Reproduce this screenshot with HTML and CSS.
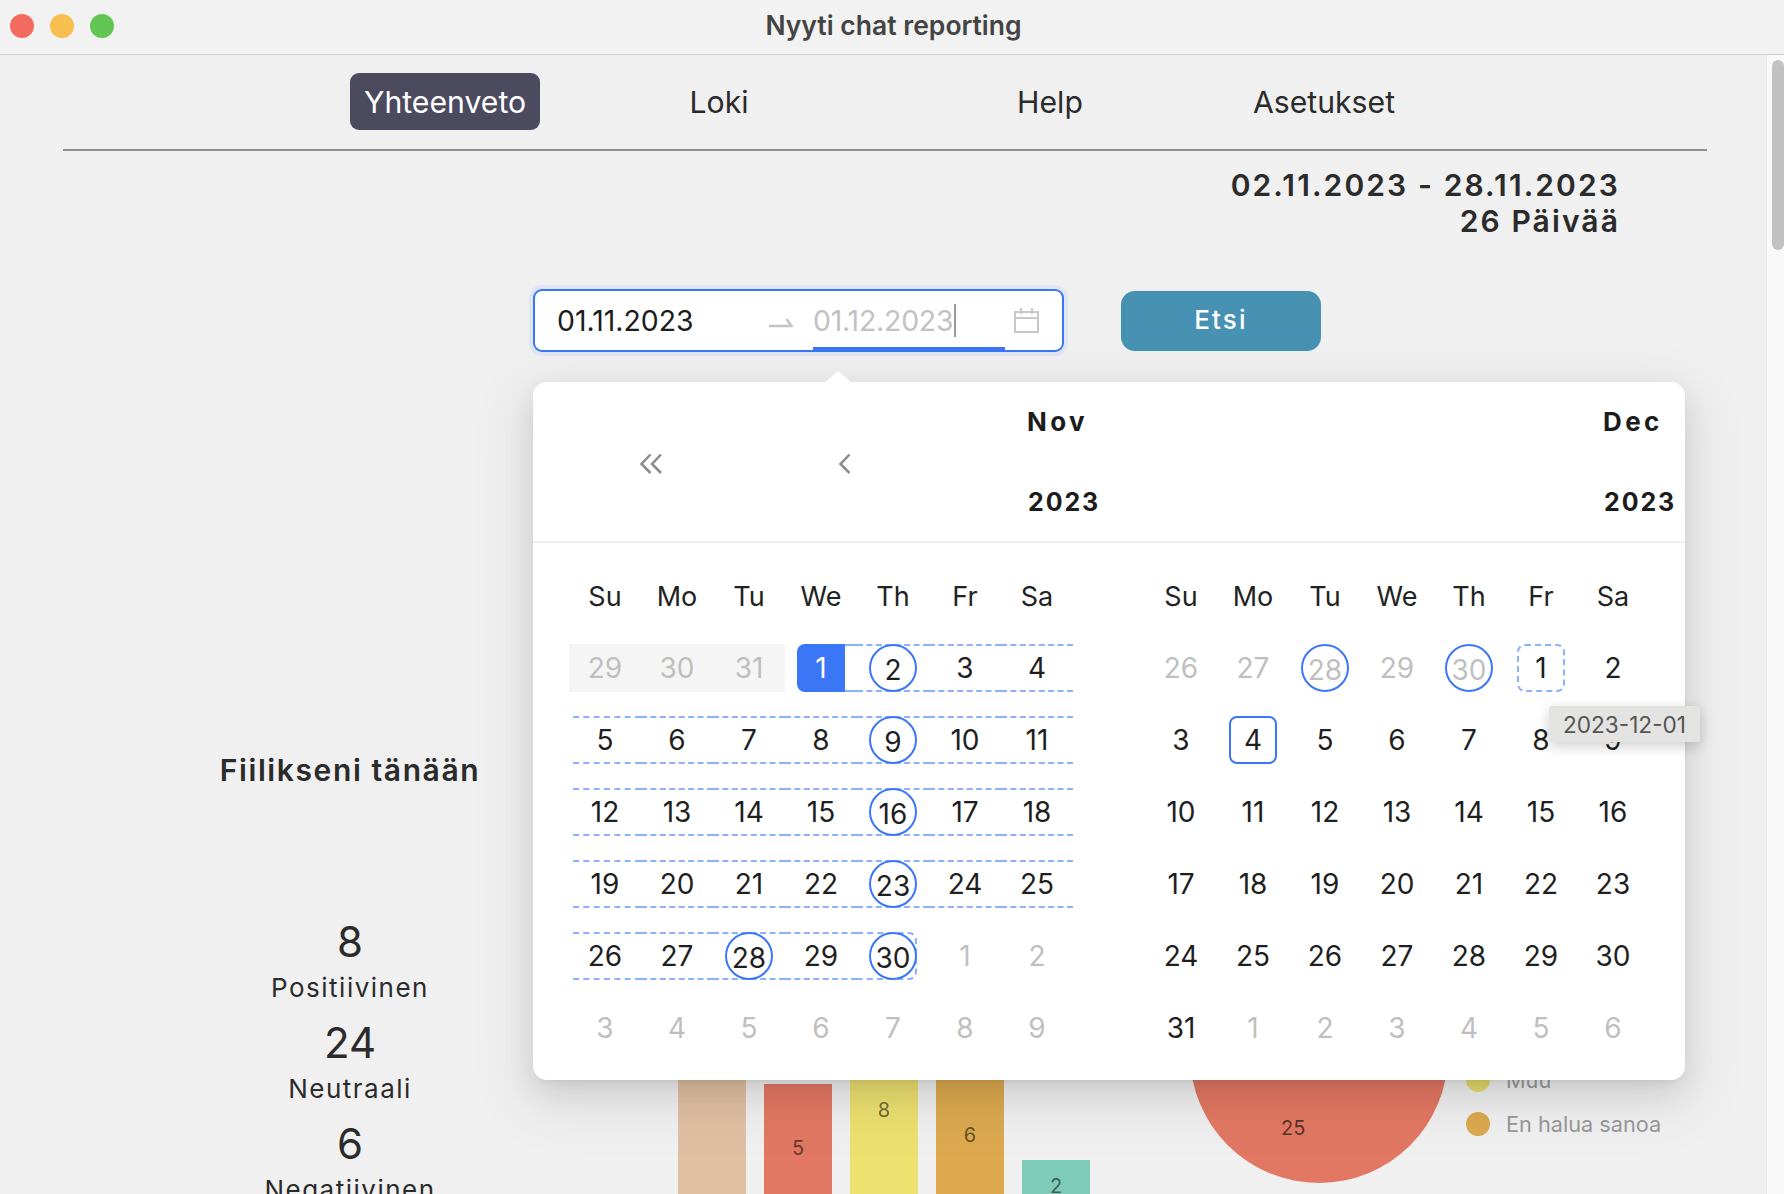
FILE: index.html
```html
<!DOCTYPE html>
<html lang="fi">
<head>
    <meta charset="UTF-8">
    <title>Nyyti chat reporting</title>
    <link rel="stylesheet" href="styles.css">
</head>
<body>

    <header class="titlebar">
        <div class="lights">
            <span class="light red"></span>
            <span class="light yellow"></span>
            <span class="light green"></span>
        </div>
        <div class="window-title">Nyyti chat reporting</div>
    </header>

    <div class="window">
        <main class="page">
            <nav class="nav">
                <a class="nav-item active">Yhteenveto</a>
                <a class="nav-item">Loki</a>
                <a class="nav-item">Help</a>
                <a class="nav-item">Asetukset</a>
            </nav>
            <div class="nav-line"></div>

            <div class="range-info">
                <div>02.11.2023 - 28.11.2023</div>
                <div>26 Päivää</div>
            </div>

            <div class="search-row">
                <div class="range-input">
                    <span class="range-from">01.11.2023</span>
                    <svg class="swap-icon" width="24" height="10" viewBox="0 0 24 10">
                        <path d="M0 8H22.5L17.5 1" fill="none" stroke="#c4c4c4" stroke-width="2.5"/>
                    </svg>
                    <span class="range-to">01.12.2023</span>
                    <svg class="date-icon" width="25" height="25" viewBox="0 0 25 25">
                        <path d="M1 4H24V24H1ZM1 10H24M7 0V6M18 0V6" fill="none" stroke="#c8c8c8" stroke-width="2"/>
                    </svg>
                    <span class="active-bar"></span>
                </div>
                <button class="search-btn">Etsi</button>
            </div>

            <section class="content">
                <div class="mood">
                    <h2 class="mood-title">Fiilikseni tänään</h2>
                    <div class="stat"><div class="stat-num">8</div><div class="stat-label">Positiivinen</div></div>
                    <div class="stat"><div class="stat-num">24</div><div class="stat-label">Neutraali</div></div>
                    <div class="stat"><div class="stat-num">6</div><div class="stat-label">Negatiivinen</div></div>
                </div>

                <div class="bars">
                    <div class="bar tan" style="height: 304px">12</div>
                    <div class="bar red-bar" style="height: 127px">5</div>
                    <div class="bar yellow-bar" style="height: 203px">8</div>
                    <div class="bar orange-bar" style="height: 152px">6</div>
                    <div class="bar teal-bar" style="height: 51px">2</div>
                </div>

                <svg class="pie" width="258" height="258" viewBox="0 0 258 258">
                    <circle cx="129" cy="129" r="129" fill="#e27863"/>
                    <text x="91" y="210" class="pie-label">25</text>
                </svg>

                <ul class="legend">
                    <li><span class="dot muu"></span>Muu</li>
                    <li><span class="dot sanoa"></span>En halua sanoa</li>
                </ul>
            </section>
        </main>

        <aside class="scrollbar"><div class="thumb"></div></aside>
    </div>

    <!-- Avoin kalenteri -->
    <div class="picker">
        <div class="picker-head">
            <div class="head-left">
                <svg class="prev-year" width="24" height="21" viewBox="0 0 24 21">
                    <path d="M11.5 1.5L2.5 11L11.5 20M22 1.5L13 11L22 20" fill="none" stroke="#8c8c8c" stroke-width="2.5"/>
                </svg>
                <svg class="prev-month" width="13" height="21" viewBox="0 0 13 21">
                    <path d="M11.5 1.5L2.5 11L11.5 20" fill="none" stroke="#8c8c8c" stroke-width="2.5"/>
                </svg>
                <div class="head-title"><span class="head-month">Nov</span><span class="head-year">2023</span></div>
            </div>
            <div class="head-right">
                <div class="head-title"><span class="head-month">Dec</span><span class="head-year">2023</span></div>
            </div>
        </div>

        <div class="months">
            <div class="month">
                <div class="wd">Su</div><div class="wd">Mo</div><div class="wd">Tu</div><div class="wd">We</div><div class="wd">Th</div><div class="wd">Fr</div><div class="wd">Sa</div>

                <div class="day off past"><span>29</span></div>
                <div class="day off past"><span>30</span></div>
                <div class="day off past"><span>31</span></div>
                <div class="day start"><span>1</span></div>
                <div class="day band"><span class="circle">2</span></div>
                <div class="day band"><span>3</span></div>
                <div class="day band"><span>4</span></div>

                <div class="day band first"><span>5</span></div>
                <div class="day band"><span>6</span></div>
                <div class="day band"><span>7</span></div>
                <div class="day band"><span>8</span></div>
                <div class="day band"><span class="circle">9</span></div>
                <div class="day band"><span>10</span></div>
                <div class="day band"><span>11</span></div>

                <div class="day band first"><span>12</span></div>
                <div class="day band"><span>13</span></div>
                <div class="day band"><span>14</span></div>
                <div class="day band"><span>15</span></div>
                <div class="day band"><span class="circle">16</span></div>
                <div class="day band"><span>17</span></div>
                <div class="day band"><span>18</span></div>

                <div class="day band first"><span>19</span></div>
                <div class="day band"><span>20</span></div>
                <div class="day band"><span>21</span></div>
                <div class="day band"><span>22</span></div>
                <div class="day band"><span class="circle">23</span></div>
                <div class="day band"><span>24</span></div>
                <div class="day band"><span>25</span></div>

                <div class="day band first"><span>26</span></div>
                <div class="day band"><span>27</span></div>
                <div class="day band"><span class="circle">28</span></div>
                <div class="day band"><span>29</span></div>
                <div class="day band last"><span class="circle">30</span></div>
                <div class="day off"><span>1</span></div>
                <div class="day off"><span>2</span></div>

                <div class="day off"><span>3</span></div>
                <div class="day off"><span>4</span></div>
                <div class="day off"><span>5</span></div>
                <div class="day off"><span>6</span></div>
                <div class="day off"><span>7</span></div>
                <div class="day off"><span>8</span></div>
                <div class="day off"><span>9</span></div>
            </div>

            <div class="month">
                <div class="wd">Su</div><div class="wd">Mo</div><div class="wd">Tu</div><div class="wd">We</div><div class="wd">Th</div><div class="wd">Fr</div><div class="wd">Sa</div>

                <div class="day off"><span>26</span></div>
                <div class="day off"><span>27</span></div>
                <div class="day off"><span class="circle">28</span></div>
                <div class="day off"><span>29</span></div>
                <div class="day off"><span class="circle">30</span></div>
                <div class="day"><span class="hover-end">1</span></div>
                <div class="day"><span>2</span></div>

                <div class="day"><span>3</span></div>
                <div class="day"><span class="today">4</span></div>
                <div class="day"><span>5</span></div>
                <div class="day"><span>6</span></div>
                <div class="day"><span>7</span></div>
                <div class="day"><span>8</span></div>
                <div class="day"><span>9</span></div>

                <div class="day"><span>10</span></div>
                <div class="day"><span>11</span></div>
                <div class="day"><span>12</span></div>
                <div class="day"><span>13</span></div>
                <div class="day"><span>14</span></div>
                <div class="day"><span>15</span></div>
                <div class="day"><span>16</span></div>

                <div class="day"><span>17</span></div>
                <div class="day"><span>18</span></div>
                <div class="day"><span>19</span></div>
                <div class="day"><span>20</span></div>
                <div class="day"><span>21</span></div>
                <div class="day"><span>22</span></div>
                <div class="day"><span>23</span></div>

                <div class="day"><span>24</span></div>
                <div class="day"><span>25</span></div>
                <div class="day"><span>26</span></div>
                <div class="day"><span>27</span></div>
                <div class="day"><span>28</span></div>
                <div class="day"><span>29</span></div>
                <div class="day"><span>30</span></div>

                <div class="day"><span>31</span></div>
                <div class="day off"><span>1</span></div>
                <div class="day off"><span>2</span></div>
                <div class="day off"><span>3</span></div>
                <div class="day off"><span>4</span></div>
                <div class="day off"><span>5</span></div>
                <div class="day off"><span>6</span></div>
            </div>
        </div>

        <div class="tooltip">2023-12-01</div>
    </div>

</body>
</html>
```

FILE: styles.css
```css
* {
    box-sizing: border-box;
}
html, body {
    margin: 0;
    height: 1194px;
    overflow: hidden;
}
body {
    position: relative;
    font-family: Inter, "Noto Sans", sans-serif;
    color: #222;
    background-color: #f0f0f0;
}

/* Ikkunan otsikkopalkki */
.titlebar {
    position: relative;
    height: 55px;
    display: flex;
    align-items: center;
    justify-content: center;
    background-color: #f2f2f2;
    border-bottom: 1px solid #cfcfcf;
    padding: 0 0 4px 3px;
}
.lights {
    position: absolute;
    left: 10px;
    top: 14px;
    display: flex;
    gap: 16px;
}
.light {
    width: 24px;
    height: 24px;
    border-radius: 50%;
}
.red { background-color: #f26b5e; }
.yellow { background-color: #f6bf4f; }
.green { background-color: #61c654; }
.window-title {
    font-size: 26.5px;
    font-weight: 600;
    color: #444;
}

.window {
    display: flex;
    height: 1139px;
}
.page {
    width: 1766px;
    flex-shrink: 0;
}
.scrollbar {
    flex: 1;
    background-color: #f9f9f9;
    border-left: 1px solid #e8e8e8;
    padding: 5px 0 0 5px;
}
.thumb {
    height: 190px;
    background-color: #c1c1c1;
    border-radius: 7px;
}

/* Navigaatio */
.nav {
    display: grid;
    grid-template-columns: 190px 358px 304px 244px;
    margin: 18px 0 0 350px;
    height: 57px;
}
.nav-item {
    display: flex;
    align-items: center;
    justify-content: center;
    font-size: 30.2px;
    color: #2b2b2b;
}
.nav-item.active {
    background-color: #4c4a5e;
    color: #fff;
    border-radius: 9px;
}
.nav-line {
    height: 2px;
    margin: 19px 59px 0 63px;
    background-color: #8f8f8f;
}

.range-info {
    margin-top: 16px;
    padding-right: 146px;
    text-align: right;
    font-size: 30px;
    line-height: 36px;
    font-weight: 600;
    letter-spacing: 2.1px;
    color: #2b2b2b;
}

/* Hakurivi */
.search-row {
    display: flex;
    align-items: center;
    gap: 57px;
    margin-top: 50px;
    padding-left: 533px;
}
.range-input {
    position: relative;
    display: flex;
    align-items: center;
    width: 531px;
    height: 63px;
    padding-left: 22px;
    background-color: #fff;
    border: 2px solid #3b76f6;
    border-radius: 9px;
    box-shadow: 0 0 0 4px #dfe6f1;
    font-size: 28.4px;
}
.range-from {
    width: 212px;
    color: #1c1c1c;
}
.range-to {
    margin-left: 20px;
    padding-right: 1px;
    color: #c2c2c2;
    border-right: 2px solid #9a9a9a;
    letter-spacing: -0.2px;
    line-height: 33px;
}
.swap-icon {
    margin-top: 4px;
}
.date-icon {
    margin-left: 58px;
}
.active-bar {
    position: absolute;
    left: 278px;
    bottom: 0;
    width: 192px;
    height: 3px;
    background-color: #3b76f6;
}
.search-btn {
    width: 200px;
    height: 60px;
    padding: 0 0 2px;
    border: none;
    border-radius: 14px;
    background-color: #4791b3;
    color: #fff;
    font-family: inherit;
    font-size: 26px;
    font-weight: 500;
    letter-spacing: 2.2px;
}

/* Sisalto kalenterin alla */
.content {
    display: flex;
    align-items: flex-end;
    height: 471px;
    margin-top: 388px;
    padding-left: 63px;
}
.mood {
    align-self: flex-start;
    width: 574px;
    text-align: center;
}
.mood-title {
    margin: 0 0 119px;
    font-size: 30px;
    line-height: 60px;
    font-weight: 600;
    letter-spacing: 1.6px;
    color: #2b2b2b;
}
.stat {
    margin-bottom: 9px;
}
.stat-num {
    font-size: 42px;
    line-height: 46px;
    color: #2b2b2b;
}
.stat-label {
    font-size: 26px;
    line-height: 46px;
    letter-spacing: 1.5px;
    color: #2b2b2b;
}

.bars {
    display: flex;
    align-items: flex-end;
    gap: 18px;
    margin-left: 41px;
}
.bar {
    width: 68px;
    display: flex;
    align-items: center;
    justify-content: center;
    font-size: 20px;
    color: rgba(0, 0, 0, 0.55);
}
.tan { background-color: #e0c0a3; }
.red-bar { background-color: #e27863; }
.yellow-bar { background-color: #ece06f; }
.orange-bar { background-color: #dca94f; }
.teal-bar { background-color: #7fcbba; }

.pie {
    margin: 0 0 28px 100px;
}
.pie-label {
    font-size: 20px;
    fill: rgba(0, 0, 0, 0.6);
}
.legend {
    list-style: none;
    margin: 0 0 65px 18px;
    padding: 0;
    font-size: 21.7px;
    color: #999;
}
.legend li {
    display: flex;
    align-items: center;
    gap: 16px;
    height: 44px;
}
.dot {
    width: 24px;
    height: 24px;
    border-radius: 50%;
}
.muu { background-color: #e5dc6c; }
.sanoa { background-color: #dca94f; }

/* Kalenteri */
.picker {
    position: absolute;
    left: 533px;
    top: 382px;
    width: 1152px;
    height: 698px;
    background-color: #fff;
    border-radius: 14px;
    box-shadow: 0 12px 32px rgba(0, 0, 0, 0.1), 0 6px 12px -8px rgba(0, 0, 0, 0.14), 0 18px 56px 16px rgba(0, 0, 0, 0.06);
}
.picker::before {
    content: "";
    position: absolute;
    left: 291px;
    top: -11px;
    width: 28px;
    height: 12px;
    background-color: #fff;
    clip-path: polygon(50% 0, 100% 100%, 0 100%);
}
.picker-head {
    display: grid;
    grid-template-columns: 576px 576px;
    height: 161px;
    border-bottom: 2px solid #eeeeee;
}
.head-left {
    display: flex;
    align-items: center;
    padding-left: 106px;
}
.head-right {
    display: flex;
    align-items: center;
    padding-left: 494px;
}
.prev-year,
.prev-month {
    margin-top: 2px;
}
.prev-month {
    margin-left: 175px;
}
.head-left .head-title {
    margin-left: 176px;
}
.head-title {
    display: flex;
    flex-direction: column;
    font-size: 26px;
    line-height: 80px;
    font-weight: 700;
    color: #1c1c1c;
}
.head-month {
    letter-spacing: 3.4px;
}
.head-year {
    font-size: 25px;
    letter-spacing: 1.9px;
    padding-left: 1px;
}
.months {
    display: grid;
    grid-template-columns: 576px 576px;
    padding-top: 17px;
}
.month {
    display: grid;
    grid-template-columns: repeat(7, 72px);
    grid-auto-rows: 72px;
    margin-left: 36px;
}
.wd {
    display: flex;
    align-items: center;
    justify-content: center;
    font-size: 27px;
    color: #222;
}
.day {
    position: relative;
    display: flex;
    align-items: center;
    justify-content: center;
    font-size: 28px;
    color: #1f1f1f;
}
.day span {
    position: relative;
    display: flex;
    align-items: center;
    justify-content: center;
    width: 48px;
    height: 48px;
}
.day.off {
    color: #bfbfbf;
}
.day.past::before {
    content: "";
    position: absolute;
    left: 0;
    right: 0;
    top: 12px;
    bottom: 12px;
    background-color: #f5f5f5;
}
.day.band::before {
    content: "";
    position: absolute;
    left: 0;
    right: 0;
    top: 12px;
    bottom: 12px;
    border-top: 2px dashed #8ab1fb;
    border-bottom: 2px dashed #8ab1fb;
}
.day.band.first::before {
    left: 4px;
}
.day.band.last::before {
    right: 12px;
    border-right: 2px dashed #8ab1fb;
    border-radius: 0 8px 8px 0;
}
.day.start::before {
    content: "";
    position: absolute;
    left: 60px;
    right: 0;
    top: 12px;
    bottom: 12px;
    border-top: 2px dashed #8ab1fb;
    border-bottom: 2px dashed #8ab1fb;
}
.day.start span {
    background-color: #3b76f6;
    border-radius: 8px 0 0 8px;
    color: #fff;
}
.day .circle {
    padding-top: 4px;
    border: 2px solid #3b76f6;
    border-radius: 50%;
}
.day .today {
    border: 2px solid #3b76f6;
    border-radius: 8px;
}
.day .hover-end {
    border: 2px dashed #8ab1fb;
    border-radius: 8px;
}
.tooltip {
    position: absolute;
    left: 1016px;
    top: 324px;
    width: 151px;
    height: 36px;
    display: flex;
    align-items: center;
    justify-content: center;
    background-color: #e3e3e1;
    border-radius: 2px;
    font-size: 22.6px;
    color: #555;
    box-shadow: 0 4px 14px rgba(0, 0, 0, 0.2);
}
```
